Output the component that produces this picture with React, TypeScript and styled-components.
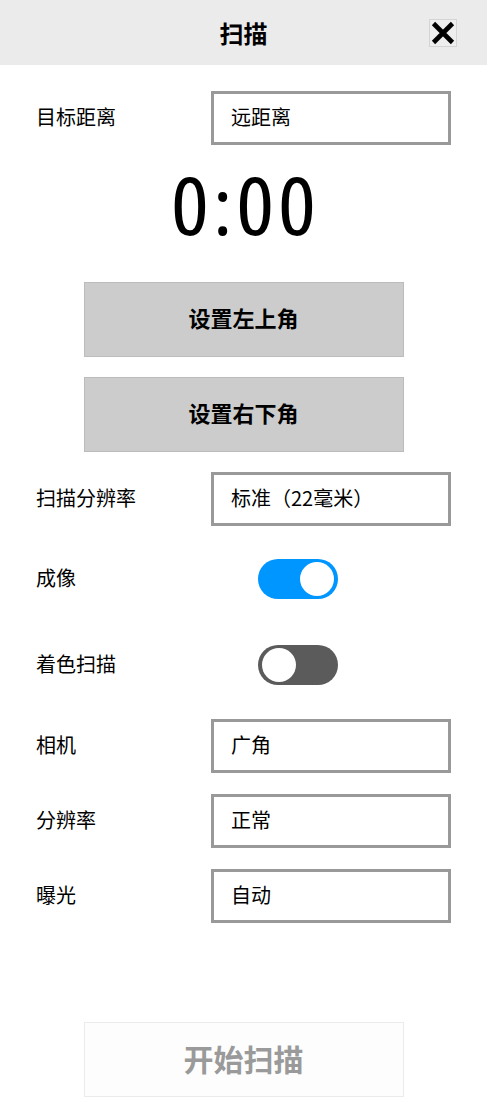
import React, { useState } from "react";
import styled, { createGlobalStyle } from "styled-components";

const GlobalStyle = createGlobalStyle`
  html, body { margin: 0; padding: 0; background: #fff; }
  body { font-family: "Noto Sans CJK SC", "Noto Sans", sans-serif; color: #000; }
  * { box-sizing: border-box; }
`;

const Page = styled.div`
  width: 487px;
  min-height: 1107px;
  display: flex;
  flex-direction: column;
  background: #fff;
`;

const Header = styled.header`
  height: 65px;
  background: #ebebeb;
  display: grid;
  grid-template-columns: 1fr auto 1fr;
  align-items: center;
`;

const Title = styled.h1`
  grid-column: 2;
  margin: 0;
  font-size: 24px;
  font-weight: 700;
  line-height: 1;
  padding-top: 1px;
`;

const CloseButton = styled.button`
  grid-column: 3;
  justify-self: end;
  margin-right: 30px;
  margin-top: 1px;
  width: 28px;
  height: 28px;
  padding: 0;
  border: 1px solid #d4d4d4;
  background: #eeeeee;
  display: flex;
  align-items: center;
  justify-content: center;
  cursor: pointer;
`;

const Row = styled.div<{ $h: number }>`
  height: ${(p) => p.$h}px;
  display: grid;
  grid-template-columns: 175px 240px;
  align-items: center;
  padding-left: 36px;
`;

const Label = styled.span`
  font-size: 20px;
  line-height: 1;
  padding-bottom: 2px;
`;

const Field = styled.div`
  width: 240px;
  height: 54px;
  border: 3px solid #999999;
  display: flex;
  align-items: center;
  padding: 0 17px 2px;
  font-size: 20px;
  line-height: 1;
`;

const Timer = styled.div`
  height: 98px;
  line-height: 98px;
  text-align: center;
  font-family: "Open Sans", sans-serif;
  font-stretch: 75%;
  font-weight: 400;
  font-size: 81px;
`;

const TimerText = styled.span`
  display: inline-block;
  letter-spacing: 3.5px;
  padding-left: 3.5px;
  transform: scaleX(1.1);
`;

const Actions = styled.div`
  display: flex;
  flex-direction: column;
  align-items: center;
  gap: 20px;
  margin-top: 28.5px;
  margin-bottom: 9.5px;
`;

const CornerButton = styled.button`
  width: 320px;
  height: 75px;
  background: #cccccc;
  border: 1px solid #bcbcbc;
  font-family: "Noto Sans CJK SC", sans-serif;
  font-size: 22px;
  font-weight: 700;
  color: #000;
  padding: 0 0 4px;
  cursor: pointer;
`;

const Track = styled.button<{ $on: boolean }>`
  margin-left: 47px;
  width: 80px;
  height: 40px;
  border: none;
  border-radius: 20px;
  padding: 3px 4px;
  background: ${(p) => (p.$on ? "#0096ff" : "#5b5b5b")};
  display: flex;
  justify-content: ${(p) => (p.$on ? "flex-end" : "flex-start")};
  align-items: center;
  cursor: pointer;
`;

const Knob = styled.span`
  width: 34px;
  height: 34px;
  border-radius: 50%;
  background: #fff;
`;

const Footer = styled.div`
  margin-top: auto;
  padding-bottom: 10px;
  display: flex;
  justify-content: center;
`;

const StartButton = styled.button`
  width: 320px;
  height: 75px;
  background: #fdfdfd;
  border: 1px solid #ebebeb;
  font-family: "Noto Sans CJK SC", sans-serif;
  font-size: 30px;
  font-weight: 700;
  color: #9a9a9a;
  padding: 0 0 4px;
`;

const Toggle = ({ on, onClick }: { on: boolean; onClick: () => void }) => (
  <Track $on={on} onClick={onClick} aria-pressed={on}>
    <Knob />
  </Track>
);

export default function App() {
  const [imaging, setImaging] = useState(true);
  const [color, setColor] = useState(false);

  return (
    <Page>
      <GlobalStyle />
      <Header>
        <Title>扫描</Title>
        <CloseButton aria-label="关闭">
          <svg width="26" height="26" viewBox="0 0 26 26">
            <path d="M3.5 3.5 L22.5 22.5 M22.5 3.5 L3.5 22.5" stroke="#000" strokeWidth="4.6" />
          </svg>
        </CloseButton>
      </Header>

      <Row $h={75} style={{ marginTop: 15 }}>
        <Label>目标距离</Label>
        <Field>远距离</Field>
      </Row>

      <Timer>
        <TimerText>0:00</TimerText>
      </Timer>

      <Actions>
        <CornerButton>设置左上角</CornerButton>
        <CornerButton>设置右下角</CornerButton>
      </Actions>

      <Row $h={75}>
        <Label>扫描分辨率</Label>
        <Field>标准（22毫米）</Field>
      </Row>
      <Row $h={86}>
        <Label>成像</Label>
        <Toggle on={imaging} onClick={() => setImaging(!imaging)} />
      </Row>
      <Row $h={86}>
        <Label>着色扫描</Label>
        <Toggle on={color} onClick={() => setColor(!color)} />
      </Row>
      <Row $h={75}>
        <Label>相机</Label>
        <Field>广角</Field>
      </Row>
      <Row $h={75}>
        <Label>分辨率</Label>
        <Field>正常</Field>
      </Row>
      <Row $h={75}>
        <Label>曝光</Label>
        <Field>自动</Field>
      </Row>

      <Footer>
        <StartButton disabled>开始扫描</StartButton>
      </Footer>
    </Page>
  );
}
